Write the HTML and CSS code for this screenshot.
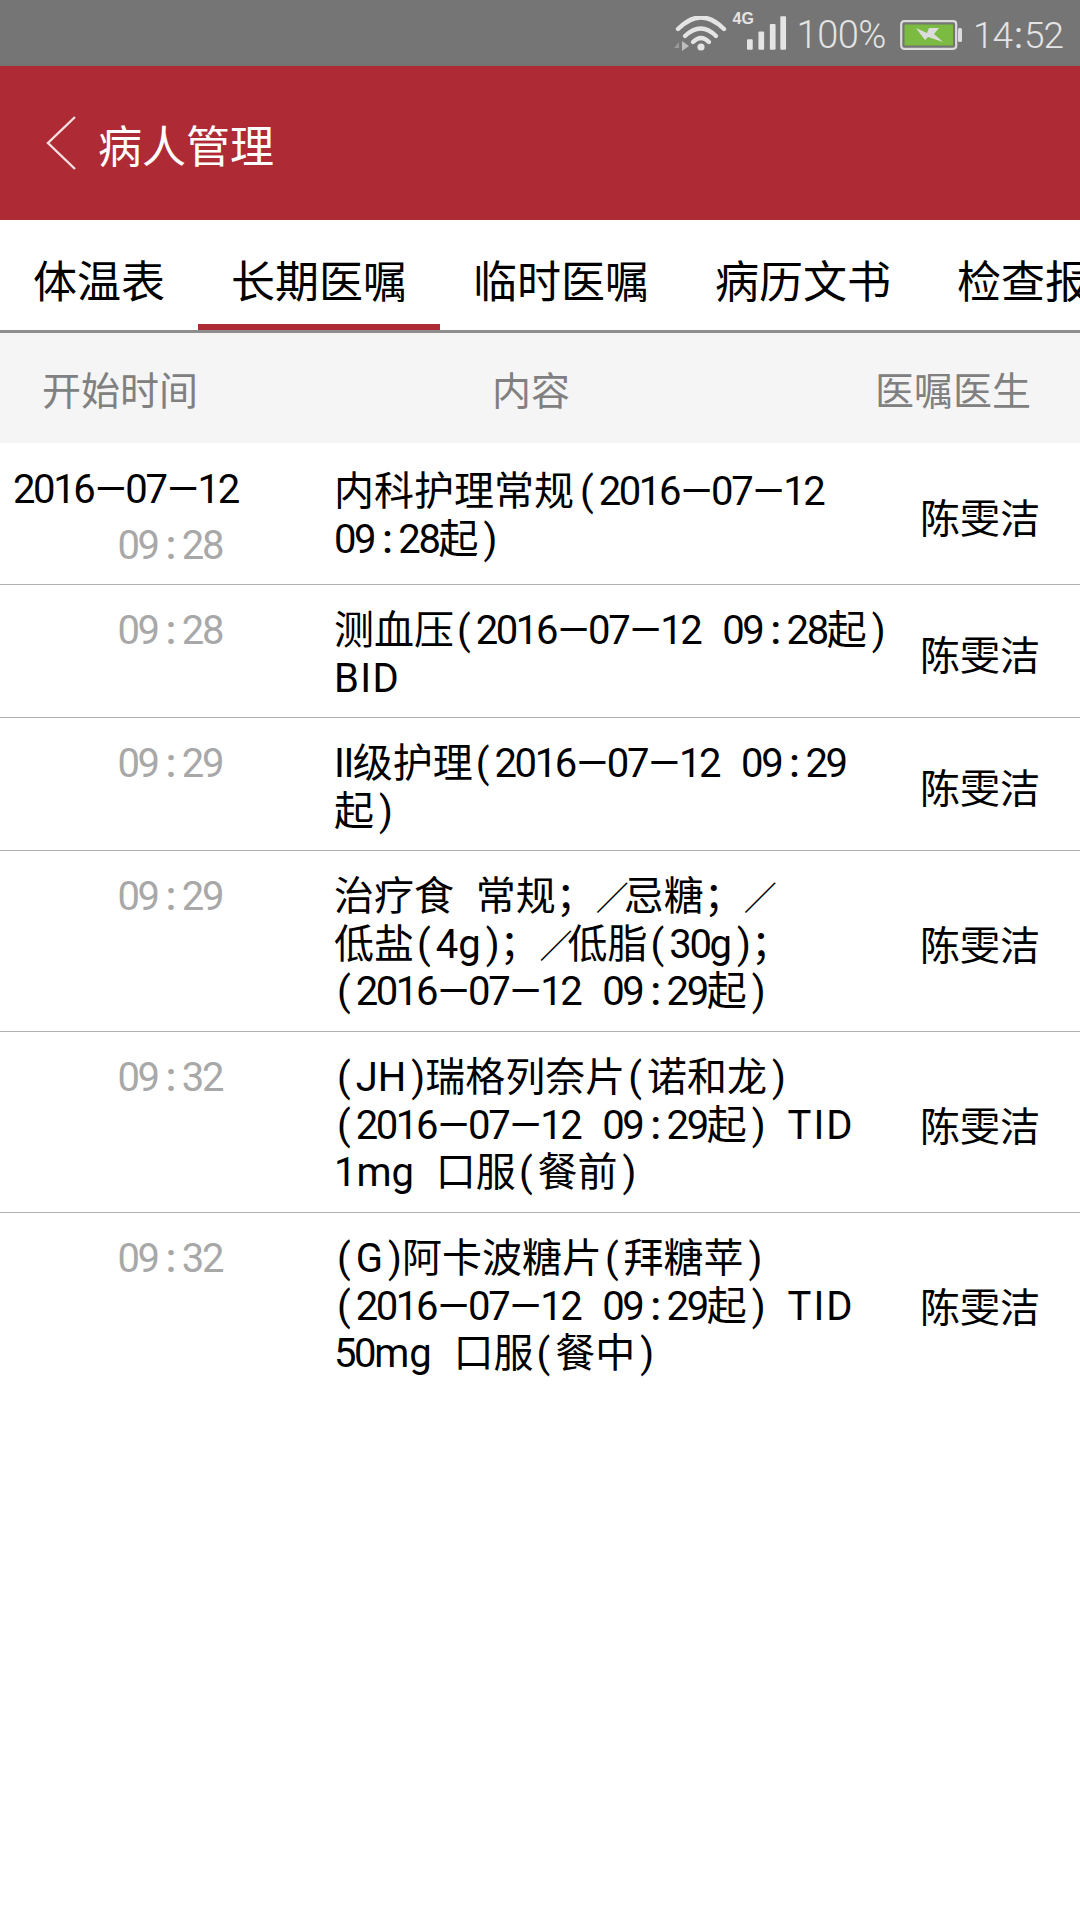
FILE: index.html
```html
<!DOCTYPE html>
<html lang="zh-CN">
<head>
<meta charset="utf-8">
<title>病人管理</title>
<link rel="stylesheet" href="styles.css">
</head>
<body>
<div class="app">
  <div class="statusbar">
    <svg class="ic-wifi" viewBox="0 0 54 36" width="54" height="36">
      <path d="M5 13 Q28 -10 51 13" class="arc"/>
      <path d="M12 20 Q28 5 43 20" class="arc"/>
      <path d="M20 26 Q28 18 36 26" class="arc"/>
      <circle cx="28" cy="31" r="3.6" fill="#e4e4e4"/>
      <path d="M6 26 L1 32 L6 32Z" fill="#9a9a9a"/>
      <path d="M9 25 V35 L16 30Z" fill="#bdbdbd"/>
    </svg>
    <div class="signal">
      <span class="net">4G</span>
      <svg viewBox="0 0 42 36" width="40" height="35">
        <rect x="0" y="24" width="6" height="11" rx="1" fill="#e4e4e4"/>
        <rect x="12" y="16" width="6" height="19" rx="1" fill="#e4e4e4"/>
        <rect x="24" y="8" width="6" height="27" rx="1" fill="#e4e4e4"/>
        <rect x="35" y="0" width="6" height="35" rx="1" fill="#e4e4e4"/>
      </svg>
    </div>
    <span class="pct">100%</span>
    <svg class="ic-batt" viewBox="0 0 62 30" width="62" height="30">
      <rect x="1.2" y="1.2" width="55" height="27.6" rx="3" fill="none" stroke="#dcdcdc" stroke-width="2.2"/>
      <rect x="4.5" y="4.5" width="48.5" height="21" fill="#7cbb41"/>
      <rect x="58" y="8" width="4" height="14" rx="1.5" fill="#dcdcdc"/>
      <path d="M16 8 L27 13 L29 8 L39 8 L34 14 L43 22 L28 17 L25 20 Z" fill="#dcdcdc"/>
    </svg>
    <span class="clock">14<span class="c">:</span>52</span>
  </div>

  <header class="titlebar">
    <svg class="back" viewBox="0 0 31 54" width="31" height="54"><path d="M29 1 L2 27 L29 53" fill="none" stroke="#f6dfe0" stroke-width="2.4"/></svg>
    <h1 class="title">病人管理</h1>
  </header>

  <nav class="tabs">
    <span class="tab">体温表</span>
    <span class="tab active">长期医嘱</span>
    <span class="tab">临时医嘱</span>
    <span class="tab">病历文书</span>
    <span class="tab">检查报告</span>
  </nav>

  <div class="thead">
    <span>开始时间</span>
    <span>内容</span>
    <span>医嘱医生</span>
  </div>

  <div class="row first">
    <div class="when"><span class="date n">2016<i class="d">—</i>07<i class="d">—</i>12</span><span class="time n">09<i class="c">:</i>28</span></div>
    <div class="what">内科护理常规<i class="lp">(</i><span class="n">2016<i class="d">—</i>07<i class="d">—</i>12</span><br><span class="n">09<i class="c">:</i>28</span>起<i class="rp">)</i></div>
    <div class="who">陈雯洁</div>
  </div>
  <div class="row">
    <div class="when"><span class="time n">09<i class="c">:</i>28</span></div>
    <div class="what">测血压<i class="lp">(</i><span class="n">2016<i class="d">—</i>07<i class="d">—</i>12</span>&nbsp;&nbsp;<span class="n">09<i class="c">:</i>28</span>起<i class="rp">)</i><br><span class="caps">BID</span></div>
    <div class="who">陈雯洁</div>
  </div>
  <div class="row">
    <div class="when"><span class="time n">09<i class="c">:</i>29</span></div>
    <div class="what"><span class="ii">II</span>级护理<i class="lp">(</i><span class="n">2016<i class="d">—</i>07<i class="d">—</i>12</span>&nbsp;&nbsp;<span class="n">09<i class="c">:</i>29</span><br>起<i class="rp">)</i></div>
    <div class="who">陈雯洁</div>
  </div>
  <div class="row three">
    <div class="when"><span class="time n">09<i class="c">:</i>29</span></div>
    <div class="what">治疗食&nbsp;&nbsp;常规；<i class="s">／</i>忌糖；<i class="s">／</i><br>低盐<i class="lp">(</i>4g<i class="rp">)</i>；<i class="s">／</i>低脂<i class="lp">(</i><span class="n">30</span>g<i class="rp">)</i>；<br><i class="lp">(</i><span class="n">2016<i class="d">—</i>07<i class="d">—</i>12</span>&nbsp;&nbsp;<span class="n">09<i class="c">:</i>29</span>起<i class="rp">)</i></div>
    <div class="who">陈雯洁</div>
  </div>
  <div class="row three">
    <div class="when"><span class="time n">09<i class="c">:</i>32</span></div>
    <div class="what"><i class="lp">(</i>JH<i class="rp">)</i>瑞格列奈片<i class="lp">(</i>诺和龙<i class="rp">)</i><br><i class="lp">(</i><span class="n">2016<i class="d">—</i>07<i class="d">—</i>12</span>&nbsp;&nbsp;<span class="n">09<i class="c">:</i>29</span>起<i class="rp">)</i>&nbsp;&nbsp;<span class="caps tid">TID</span><br>1mg&nbsp;&nbsp;口服<i class="lp">(</i>餐前<i class="rp">)</i></div>
    <div class="who">陈雯洁</div>
  </div>
  <div class="row three last">
    <div class="when"><span class="time n">09<i class="c">:</i>32</span></div>
    <div class="what"><i class="lp">(</i>G<i class="rp">)</i>阿卡波糖片<i class="lp">(</i>拜糖苹<i class="rp">)</i><br><i class="lp">(</i><span class="n">2016<i class="d">—</i>07<i class="d">—</i>12</span>&nbsp;&nbsp;<span class="n">09<i class="c">:</i>29</span>起<i class="rp">)</i>&nbsp;&nbsp;<span class="caps tid">TID</span><br><span class="n">50</span>mg&nbsp;&nbsp;口服<i class="lp">(</i>餐中<i class="rp">)</i></div>
    <div class="who">陈雯洁</div>
  </div>
</div>
</body>
</html>
```
FILE: styles.css
```css
* { box-sizing: border-box; }
html, body { margin: 0; padding: 0; background: #fff; }
body { font-family: Roboto, "Noto Sans CJK SC", sans-serif; color: #000; }
i { font-style: normal; }
.app { width: 1080px; height: 1920px; overflow: hidden; background: #fff; }

.statusbar { height: 66px; background: #757575; display: flex; align-items: center; justify-content: flex-end; padding: 0 17px 0 0; color: #e4e4e4; }
.arc { fill: none; stroke: #e4e4e4; stroke-width: 4.4; stroke-linecap: round; }
.ic-wifi { margin-right: 20px; margin-top: 2px; }
.signal { position: relative; width: 40px; height: 35px; margin-right: 10px; margin-top: 1px; }
.signal svg { display: block; }
.net { position: absolute; left: -14px; top: -6px; font: 700 16px "Liberation Sans", sans-serif; color: #e4e4e4; }
.pct { font-weight: 300; font-size: 38px; line-height: 1; margin-right: 14px; padding-top: 4px; letter-spacing: -0.5px; }
.ic-batt { margin-right: 11px; margin-top: 3px; }
.clock { font-weight: 300; font-size: 37px; line-height: 1; padding-top: 4px; letter-spacing: -1px; }
.clock .c { margin: 0 2px; font-weight: 400; }

.titlebar { height: 154px; background: #ae2b35; display: flex; align-items: center; color: #fff; padding-left: 46px; }
.back { margin-right: 21px; }
.title { margin: 10px 0 0; font-size: 44px; font-weight: 400; line-height: 1; }

.tabs { height: 113px; display: flex; border-bottom: 3px solid #8e8e8e; overflow: hidden; }
.tab { flex: none; padding: 0 33px; height: 110px; line-height: 127px; font-size: 44px; white-space: nowrap; }
.tab.active { border-bottom: 6px solid #ae2b35; }

.thead { height: 110px; background: #f5f5f5; display: grid; grid-template-columns: 240px 586px 254px; align-items: center; text-align: center; font-size: 39px; color: #808080; }
.thead span:nth-child(2) { padding-right: 4px; }

.row { display: grid; grid-template-columns: 334px 586px 160px; align-items: center; padding: 22px 0 15px; border-bottom: 1px solid #b0b0b0; font-size: 40px; line-height: 47.5px; min-height: 133px; }
.row.first { padding: 23px 0 14px; min-height: 142px; }
.row.three { padding-bottom: 15.5px; }
.row.last { border-bottom: 0; }
.when { align-self: start; display: flex; flex-direction: column; align-items: flex-end; padding: 0 112px 0 13px; }
.date { align-self: flex-start; white-space: nowrap; }
.time { color: #a8a8a8; }
.first .time { margin-top: 8px; }
.what { white-space: nowrap; word-spacing: 1px; }
.first .what { align-self: start; margin-top: 2px; }
.who { padding-top: 5px; }
.first .who { padding-top: 3px; }

.n { letter-spacing: -2.4px; }
.d { margin: 0 1.6px; }
.c { margin: 0 8px; font-weight: 500; }
.lp { margin: 0 5px 0 3px; }
.first .lp { margin-left: 6px; }
.rp { margin-left: 5px; }
.s { font-size: 33px; line-height: 0; letter-spacing: -5px; }
.ii { letter-spacing: -1.5px; }
.caps { letter-spacing: 1.4px; }
.tid { letter-spacing: 2px; }
```
